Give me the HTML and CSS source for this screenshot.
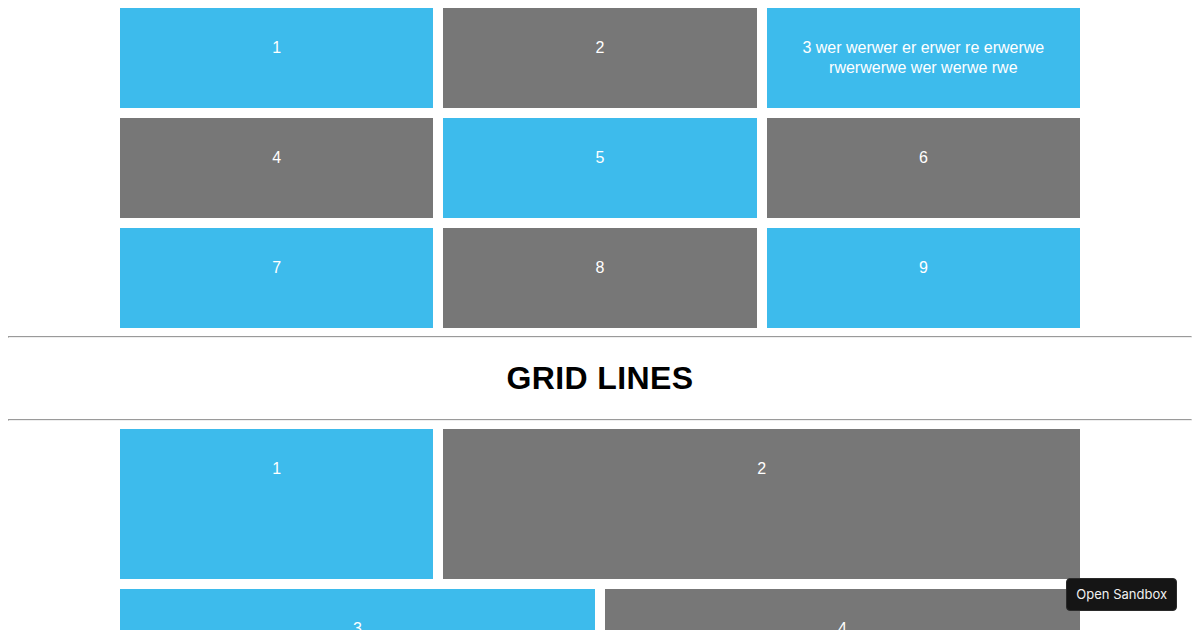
FILE: index.html
```html
<!DOCTYPE html>
<html lang="en">
<head>
    <meta charset="UTF-8">
    <meta name="viewport" content="width=device-width, initial-scale=1.0">
    <title>CSS Grid</title>
    <link rel="stylesheet" href="styles.css">
</head>
<body>
<div class="container">
    <div class="item">1</div>
    <div class="item">2</div>
    <div class="item">3 wer werwer er erwer re erwerwe rwerwerwe wer werwe rwe</div>
    <div class="item">4</div>
    <div class="item">5</div>
    <div class="item">6</div>
    <div class="item">7</div>
    <div class="item">8</div>
    <div class="item">9</div>
</div>
<hr>
<h1>GRID LINES</h1>
<hr>
<div class="container lines">
    <div class="item item-1">1</div>
    <div class="item item-2">2</div>
    <div class="item item-3">3</div>
    <div class="item item-4">4</div>
</div>
<a class="sandbox" href="#">Open Sandbox</a>
</body>
</html>
```

FILE: styles.css
```css
body{
    font-family: "Liberation Sans", Arial, sans-serif;
}
h1{
    text-align: center;
    line-height: 38px;
    letter-spacing: 0.4px;
}
.container{
    display: grid;
    grid-template-columns: repeat(3, 1fr);
    grid-auto-rows: 100px;
    gap: 10px;
    width: 960px;
    margin: 0 auto;
}
.item{
    padding: 30px;
    color: white;
    text-align: center;
    line-height: 20px;
    background-color: #3dbbec;
}
.item:nth-child(even){
    background-color: #777777;
}
.lines{
    grid-template-columns: repeat(6, 1fr);
    grid-auto-rows: 150px;
}
.item-1{
    grid-column: 1 / 3;
}
.item-2{
    grid-column: 3 / 7;
}
.item-3{
    grid-column: 1 / 4;
}
.item-4{
    grid-column: 4 / 7;
}
.sandbox{
    position: fixed;
    right: 23px;
    bottom: 19px;
    padding: 7px 9px;
    border-radius: 4px;
    background: #151515;
    color: #f0f0f0;
    font-family: Inter, "Liberation Sans", sans-serif;
    font-size: 13px;
    line-height: 17px;
    text-decoration: none;
    border: 1px solid #2a2a2a;
}
```
